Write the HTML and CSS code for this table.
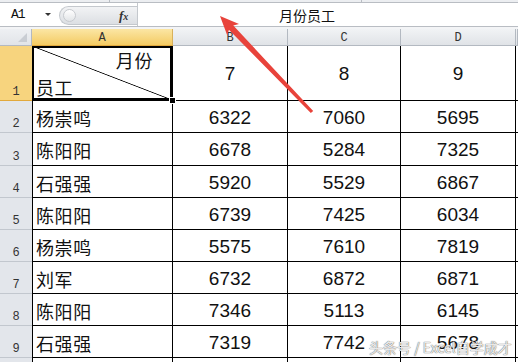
FILE: index.html
```html
<!DOCTYPE html>
<html>
<head>
<meta charset="utf-8">
<link rel="stylesheet" href="styles.css">
</head>
<body>
<div class="app">
  <div class="topstrip"><span class="seg seg1"></span><span class="seg seg2"></span><span class="seg seg3"></span></div>
  <div class="fbar">
    <div class="namebox"><span class="ref">A1</span><span class="dd"></span></div>
    <div class="pill"><span class="knob"></span><span class="fx">f<span class="fxs">x</span></span></div>
    <div class="finput">月份员工</div>
  </div>
  <div class="gap"></div>
  <div class="sheet">
    <div class="corner"><span class="tri"></span></div>
    <div class="ch sel">A</div><div class="ch">B</div><div class="ch">C</div><div class="ch">D</div><div class="ch">&nbsp;</div>

    <div class="rh selr">1</div>
    <div class="c a a1"><span class="m">月份</span><span class="e">员工</span><span class="handle"></span></div>
    <div class="c n">7</div><div class="c n">8</div><div class="c n">9</div><div class="c e2"></div>

    <div class="rh">2</div><div class="c a">杨崇鸣</div><div class="c n">6322</div><div class="c n">7060</div><div class="c n">5695</div><div class="c e2"></div>
    <div class="rh">3</div><div class="c a">陈阳阳</div><div class="c n">6678</div><div class="c n">5284</div><div class="c n">7325</div><div class="c e2"></div>
    <div class="rh">4</div><div class="c a">石强强</div><div class="c n">5920</div><div class="c n">5529</div><div class="c n">6867</div><div class="c e2"></div>
    <div class="rh">5</div><div class="c a">陈阳阳</div><div class="c n">6739</div><div class="c n">7425</div><div class="c n">6034</div><div class="c e2"></div>
    <div class="rh">6</div><div class="c a">杨崇鸣</div><div class="c n">5575</div><div class="c n">7610</div><div class="c n">7819</div><div class="c e2"></div>
    <div class="rh">7</div><div class="c a">刘军</div><div class="c n">6732</div><div class="c n">6872</div><div class="c n">6871</div><div class="c e2"></div>
    <div class="rh">8</div><div class="c a">陈阳阳</div><div class="c n">7346</div><div class="c n">5113</div><div class="c n">6145</div><div class="c e2"></div>
    <div class="rh">9</div><div class="c a">石强强</div><div class="c n">7319</div><div class="c n">7742</div><div class="c n">5678</div><div class="c e2"></div>

    <div class="rh last"></div><div class="c a last"></div><div class="c last"></div><div class="c last"></div><div class="c last"></div><div class="c e2 last"></div>
  </div>

  <svg class="arrow" width="518" height="362" viewBox="0 0 518 362">
    <polygon points="220,16 239,24 233.3,25.5 313.2,111 310.8,113 228.9,29.7 227.3,35.5" fill="#e8433b"/>
  </svg>
  <div class="watermark">头条号 / Excel自学成才</div>
</div>
</body>
</html>
```
FILE: styles.css
```css
* { box-sizing: border-box; }
html, body { margin: 0; padding: 0; }
body {
  width: 518px;
  height: 362px;
  overflow: hidden;
  background: #fff;
  font-family: "Noto Sans CJK SC", "Noto Sans", sans-serif;
}
.app {
  position: relative;
  width: 518px;
  height: 362px;
  overflow: hidden;
}

/* top strip */
.topstrip {
  height: 3px;
  display: flex;
  background: #eceef1;
  border-bottom: 1px solid #b9bdc3;
}
.seg { height: 100%; border-right: 1px solid #b9bdc3; }
.seg1 { width: 110px; }
.seg2 { width: 252px; }
.seg3 { flex: 1; border-right: none; }

/* formula bar */
.fbar {
  height: 24px;
  display: flex;
  background: #fff;
  border-bottom: 1px solid #b9bdc3;
}
.namebox {
  width: 59px;
  display: flex;
  align-items: center;
  position: relative;
  padding-left: 11px;
}
.ref {
  font-family: "Liberation Mono", monospace;
  font-size: 13px;
  color: #111;
  letter-spacing: -1px;
}
.dd {
  margin-left: 20px;
  width: 0;
  height: 0;
  border-left: 3px solid transparent;
  border-right: 3px solid transparent;
  border-top: 3px solid #333;
}
.pill {
  width: 78px;
  margin: 3px 0 1px 0;
  border-radius: 10px 0 0 10px;
  background: linear-gradient(#f2f3f5, #dcdfe3);
  border: 1px solid #c4c8cd;
  border-right: none;
  display: flex;
  align-items: center;
  padding-left: 3px;
}
.knob {
  width: 13px;
  height: 13px;
  border-radius: 50%;
  background: linear-gradient(#ffffff, #e2e4e7);
  border: 1px solid #c7cacf;
}
.fx {
  margin-left: 43px;
  font-family: "Liberation Serif", serif;
  font-style: italic;
  font-weight: bold;
  font-size: 13px;
  color: #333;
  line-height: 1;
}
.fxs { font-size: 10px; }
.finput {
  flex: 1;
  border-left: 1px solid #c4c8cd;
  padding-left: 141px;
  font-size: 14px;
  line-height: 24px;
  color: #111;
}
.gap { height: 2px; background: #f3f4f6; }

/* sheet grid */
.sheet {
  display: grid;
  grid-template-columns: 32px 141px 115px 113px 115px 2px;
  grid-template-rows: 17px 55px 32px 33px 32px 32px 32px 32px 32px 32px 4px;
}
.corner {
  background: linear-gradient(#eef0f3, #e1e4e8);
  border-right: 1px solid #b3b9c1;
  border-bottom: 1px solid #b3b9c1;
  position: relative;
}
.tri {
  position: absolute;
  right: 4px;
  bottom: 3px;
  width: 0;
  height: 0;
  border-left: 9px solid transparent;
  border-bottom: 9px solid #c9cdd3;
}
.ch {
  background: linear-gradient(#f1f3f5, #e0e3e7);
  border-right: 1px solid #b3b9c1;
  border-bottom: 1px solid #b3b9c1;
  font-family: "Liberation Mono", monospace;
  font-size: 12px;
  color: #333;
  display: flex;
  align-items: center;
  justify-content: center;
  padding-top: 1px;
}
.ch.sel {
  background: linear-gradient(#fbe6a4, #f4cb63);
  border-bottom: 1px solid #e2a93c;
  border-right: 1px solid #d9b15a;
}
.rh {
  background: #e3e6eb;
  border-bottom: 1px solid #c2c7ce;
  font-family: "Liberation Mono", monospace;
  font-size: 12px;
  color: #333;
  display: flex;
  align-items: flex-end;
  justify-content: center;
  padding-bottom: 2px;
  line-height: 12px;
}
.rh.selr {
  background: #f7d47e;
  border-bottom: 1px solid #e2a93c;
}
.rh.last { border-bottom: none; }

.c {
  border-right: 1px solid #000;
  border-bottom: 1px solid #000;
  background: #fff;
  display: flex;
  align-items: center;
  padding-top: 2px;
}
.c.last { border-bottom: none; }
.c.e2 { border-right: none; }
.c.a {
  border-left: 1px solid #000;
  padding-left: 3px;
  font-size: 18px;
  letter-spacing: 0.6px;
  color: #111;
}
.c.n {
  justify-content: center;
  font-family: "Liberation Sans", Arial, sans-serif;
  font-size: 19px;
  color: #111;
}

/* selected header cell A1 */
.c.a1 {
  position: relative;
  flex-direction: column;
  align-items: stretch;
  justify-content: space-between;
  padding: 3px 0 2px 3px;
  box-shadow: inset 0 0 0 2px #000;
  border-left: none;
  background: linear-gradient(to top right, transparent calc(50% - 0.8px), #000 50%, transparent calc(50% + 0.8px));
  line-height: 22px;
}
.a1 .m { align-self: flex-end; margin-right: 19px; }
.a1 .e { align-self: flex-start; margin-left: 1px; }
.handle {
  position: absolute;
  right: -4px;
  bottom: -4px;
  width: 7px;
  height: 7px;
  background: #000;
  border: 1px solid #fff;
}

/* overlays */
.arrow {
  position: absolute;
  left: 0;
  top: 0;
  pointer-events: none;
}
.watermark {
  position: absolute;
  left: 369px;
  top: 338px;
  font-size: 14px;
  line-height: 18px;
  color: rgba(250, 250, 250, 0.9);
  text-shadow: 0 0 1px #6f6f6f, 0 0 1px #6f6f6f;
  white-space: nowrap;
}
```
